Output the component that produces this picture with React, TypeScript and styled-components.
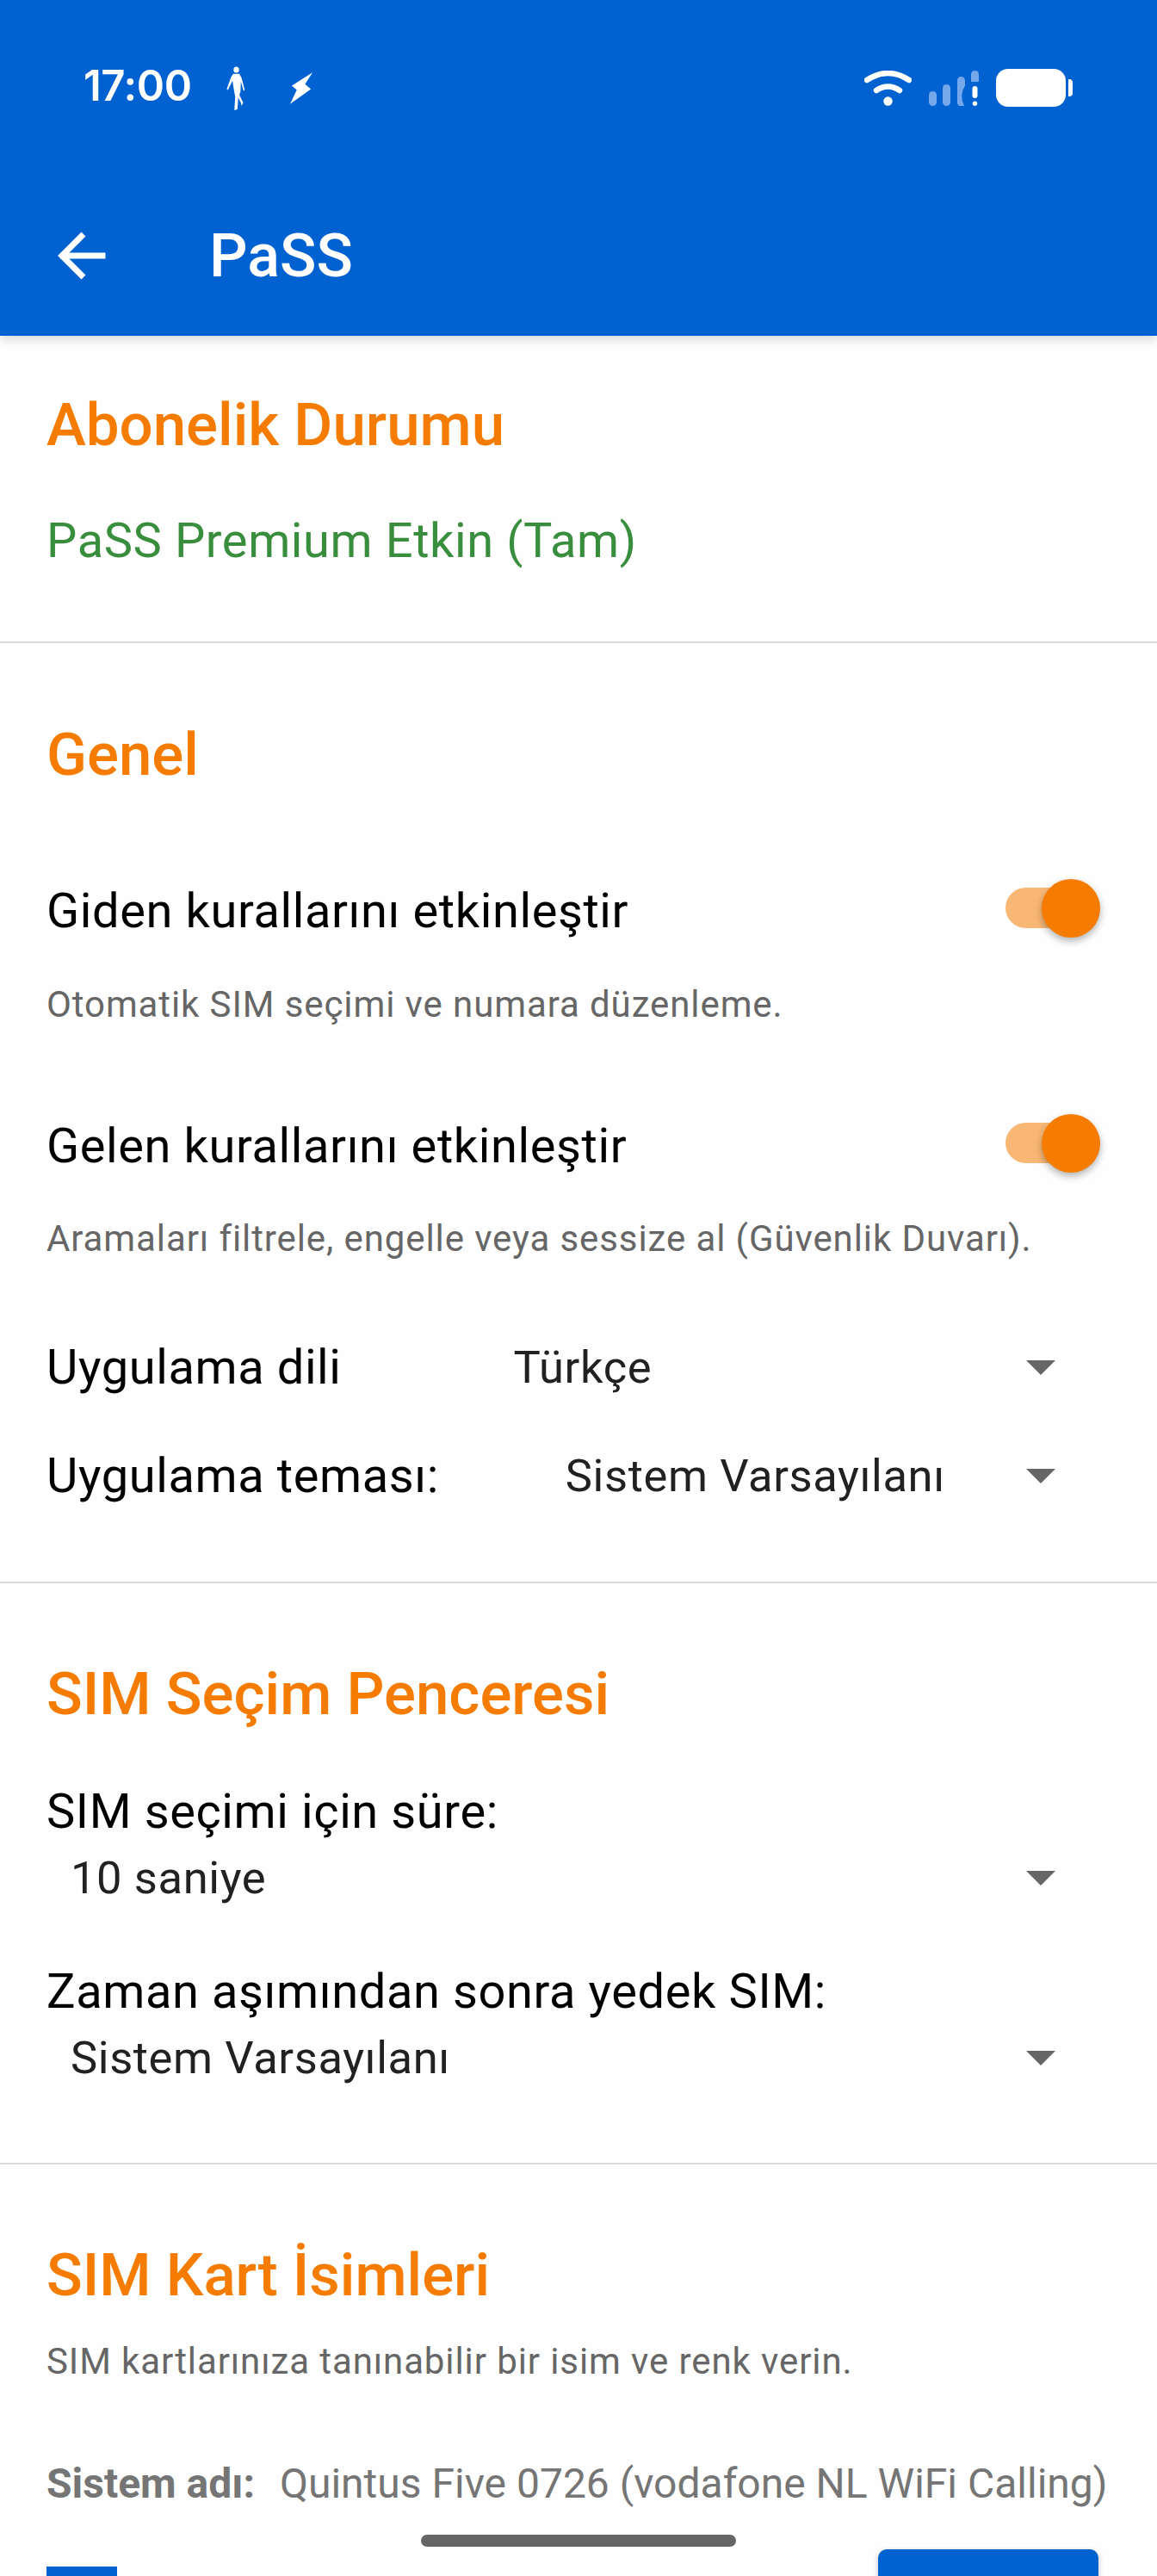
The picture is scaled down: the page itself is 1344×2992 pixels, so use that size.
import styled, { createGlobalStyle } from 'styled-components';

const GlobalStyle = createGlobalStyle`
    html, body {
        margin: 0;
        padding: 0;
        background: #fefefe;
    }
    body {
        font-family: Roboto, "Noto Sans", sans-serif;
    }
`;

const Screen = styled.div`
    position: relative;
    width: 1344px;
    height: 2992px;
    overflow: hidden;
    background: #fefefe;
`;

const AppBar = styled.header`
    height: 390px;
    background: #0062d1;
    box-shadow: 0 4px 12px rgba(0, 0, 0, 0.16);
    display: flex;
    flex-direction: column;
    position: relative;
`;

const StatusBar = styled.div`
    height: 204px;
    padding: 0 98px 0 97px;
    display: flex;
    align-items: center;
    justify-content: space-between;
    color: #fff;
`;

const StatusGroup = styled.div`
    display: flex;
    align-items: center;
`;

const Clock = styled.span`
    font-family: Inter, Roboto, sans-serif;
    font-size: 49px;
    font-weight: 600;
    letter-spacing: -0.4px;
    width: 166px;
    margin-bottom: 5px;
`;

const ToolBar = styled.div`
    height: 186px;
    display: flex;
    align-items: center;
    padding: 0 0 0 64px;
`;

const ToolTitle = styled.h1`
    margin: 0 0 0 119px;
    font-size: 70px;
    font-weight: 500;
    color: #fff;
`;

const Section = styled.section<{ $bottom?: number }>`
    padding: 0 54px ${({ $bottom }) => $bottom ?? 0}px;
    border-bottom: 2px solid #dcdcdc;

    &:last-of-type {
        border-bottom: none;
    }
`;

const SectionTitle = styled.h2<{ $top: number }>`
    margin: ${({ $top }) => $top}px 0 0;
    font-size: 69px;
    line-height: 74px;
    font-weight: 500;
    color: #f57c00;
`;

const StatusText = styled.div`
    margin: 65px 0 85px;
    font-size: 56px;
    line-height: 64px;
    color: #388e3c;
    letter-spacing: 0.6px;
`;

const ToggleRow = styled.div<{ $top: number }>`
    margin-top: ${({ $top }) => $top}px;
    display: flex;
    align-items: center;
    justify-content: space-between;
    height: 70px;
`;

const RowLabel = styled.span`
    font-size: 56px;
    line-height: 64px;
    color: #000;
    letter-spacing: 0.6px;
    white-space: nowrap;
`;

const PickerValue = styled.span`
    font-size: 52.5px;
    line-height: 64px;
    color: #212121;
    letter-spacing: 0.6px;
    white-space: nowrap;
`;

const HelpText = styled.p<{ $top: number }>`
    margin: ${({ $top }) => $top}px 0 0;
    font-size: 42px;
    line-height: 50px;
    color: #666;
    letter-spacing: 0.9px;
`;

const Track = styled.div`
    position: relative;
    width: 110px;
    height: 47px;
    margin: 0 12px 7px 0;
    border-radius: 24px;
    background: #f9b775;
`;

const Thumb = styled.div`
    position: absolute;
    right: 0;
    top: -10px;
    width: 68px;
    height: 68px;
    border-radius: 50%;
    background: #f57c00;
    box-shadow: 0 4px 8px rgba(0, 0, 0, 0.3);
`;

const Switch = () => (
    <Track>
        <Thumb />
    </Track>
);

const PickerRow = styled.div<{ $top: number }>`
    margin-top: ${({ $top }) => $top}px;
    display: flex;
    align-items: center;
    height: 64px;
`;

const PickerInline = styled.div<{ $start: number }>`
    flex: 1;
    display: flex;
    align-items: center;
    justify-content: space-between;
    padding-right: 64px;
    margin-left: ${({ $start }) => $start}px;
`;

const PickerBlock = styled.div`
    margin-left: 28px;
    height: 64px;
    display: flex;
    align-items: center;
    justify-content: space-between;
    padding-right: 64px;
`;

const Arrow = styled.span`
    width: 0;
    height: 0;
    border-left: 17px solid transparent;
    border-right: 17px solid transparent;
    border-top: 17px solid #666;
`;

const StackLabel = styled.div<{ $top: number }>`
    margin-top: ${({ $top }) => $top}px;
    height: 64px;
    display: flex;
    align-items: center;
    margin-bottom: 13px;
`;

const SystemLine = styled.div`
    margin-top: 87px;
    display: flex;
    align-items: baseline;
    font-size: 48px;
    line-height: 60px;
    color: #757575;
    white-space: nowrap;
`;

const SystemKey = styled.span`
    font-weight: 700;
    margin-right: 29px;
`;

const SimRow = styled.div`
    margin-top: 46px;
    display: flex;
    justify-content: space-between;
    align-items: flex-start;
    padding-right: 14px;
`;

const ColorSwatch = styled.div`
    margin-top: 20px;
    width: 82px;
    height: 82px;
    background: #0062d1;
`;

const SaveButton = styled.div`
    width: 256px;
    height: 120px;
    border-radius: 10px;
    background: #0062d1;
    box-shadow: 0 2px 6px rgba(0, 0, 0, 0.25);
`;

const HomePill = styled.div`
    position: absolute;
    left: 489px;
    top: 2944px;
    width: 366px;
    height: 14px;
    border-radius: 7px;
    background: #666;
`;

const WalkerIcon = () => (
    <svg width="23" height="51" viewBox="0 0 26 52" fill="#fff" preserveAspectRatio="none">
        <circle cx="13" cy="4" r="3.6" />
        <path d="M9 9 L17 9 L20 14 L24 28 L22.5 29 L19 18 L18.5 30 L17 34 L22 43 L20 47 L19 43 L15.5 37 L14.5 51 L10.5 52 L11.5 36 L9.5 26 L8 17 L2 28 L0.5 27 L6 13 Z" />
    </svg>
);

const BoltIcon = () => (
    <svg width="27" height="37" viewBox="0 0 28 38" fill="#fff" style={{ marginLeft: 51 }}>
        <path d="M27 0 L18 14 L25 20 L0 38 L8 21 L2 16 Z" />
    </svg>
);

const WifiIcon = () => (
    <svg width="55" height="41" viewBox="0 0 55 41" fill="none" stroke="#fff" strokeLinecap="round">
        <path d="M3 11 Q27.5 -5 52 11" strokeWidth="6.5" />
        <path d="M14 23 Q27.5 14 41 23" strokeWidth="6.5" />
        <circle cx="27.5" cy="35.5" r="5.2" fill="#fff" stroke="none" />
    </svg>
);

const SignalIcon = () => (
    <svg width="58" height="41" viewBox="0 0 58 41" style={{ marginLeft: 20 }}>
        <g fill="#74a8ea">
            <rect x="0" y="24" width="9" height="17" rx="4.5" />
            <rect x="16" y="16" width="9" height="25" rx="4.5" />
            <path d="M33 11.5 a4.5 4.5 0 0 1 9 0 v6 q-7 11 -1 23.5 h-4 q-4 0 -4 -4 Z" />
            <path d="M49 4.5 a4.5 4.5 0 0 1 9 0 v8.5 h-9 Z" />
        </g>
        <rect x="50.5" y="18" width="6" height="14" rx="3" fill="#fff" />
        <circle cx="53.5" cy="38.3" r="2.7" fill="#fff" />
    </svg>
);

const BatteryIcon = () => (
    <svg width="89" height="44" viewBox="0 0 89 44" style={{ marginLeft: 20 }}>
        <rect x="0" y="0" width="81" height="44" rx="14" fill="#fff" />
        <path d="M84 12 h1 a4 4 0 0 1 4 4 v12 a4 4 0 0 1 -4 4 h-1 Z" fill="#fff" />
    </svg>
);

const BackIcon = () => (
    <svg width="60" height="56" viewBox="0 0 60 56" fill="none" stroke="#fff" strokeWidth="7">
        <path d="M58.5 28 H6" />
        <path d="M33 3 L8 28 L33 53" />
    </svg>
);

export default function App() {
    return (
        <Screen>
            <GlobalStyle />
            <AppBar>
                <StatusBar>
                    <StatusGroup>
                        <Clock>17:00</Clock>
                        <WalkerIcon />
                        <BoltIcon />
                    </StatusGroup>
                    <StatusGroup>
                        <WifiIcon />
                        <SignalIcon />
                        <BatteryIcon />
                    </StatusGroup>
                </StatusBar>
                <ToolBar>
                    <BackIcon />
                    <ToolTitle>PaSS</ToolTitle>
                </ToolBar>
            </AppBar>

            <Section>
                <SectionTitle $top={67}>Abonelik Durumu</SectionTitle>
                <StatusText>PaSS Premium Etkin (Tam)</StatusText>
            </Section>

            <Section $bottom={91}>
                <SectionTitle $top={93}>Genel</SectionTitle>
                <ToggleRow $top={109}>
                    <RowLabel>Giden kurallarını etkinleştir</RowLabel>
                    <Switch />
                </ToggleRow>
                <HelpText $top={49}>Otomatik SIM seçimi ve numara düzenleme.</HelpText>
                <ToggleRow $top={104}>
                    <RowLabel>Gelen kurallarını etkinleştir</RowLabel>
                    <Switch />
                </ToggleRow>
                <HelpText $top={48}>Aramaları filtrele, engelle veya sessize al (Güvenlik Duvarı).</HelpText>
                <PickerRow $top={92}>
                    <RowLabel>Uygulama dili</RowLabel>
                    <PickerInline $start={200}>
                        <PickerValue>Türkçe</PickerValue>
                        <Arrow />
                    </PickerInline>
                </PickerRow>
                <PickerRow $top={62}>
                    <RowLabel>Uygulama teması:</RowLabel>
                    <PickerInline $start={147}>
                        <PickerValue>Sistem Varsayılanı</PickerValue>
                        <Arrow />
                    </PickerInline>
                </PickerRow>
            </Section>

            <Section $bottom={90}>
                <SectionTitle $top={92}>SIM Seçim Penceresi</SectionTitle>
                <StackLabel $top={67}>
                    <RowLabel>SIM seçimi için süre:</RowLabel>
                </StackLabel>
                <PickerBlock>
                    <PickerValue>10 saniye</PickerValue>
                    <Arrow />
                </PickerBlock>
                <StackLabel $top={68}>
                    <RowLabel>Zaman aşımından sonra yedek SIM:</RowLabel>
                </StackLabel>
                <PickerBlock>
                    <PickerValue>Sistem Varsayılanı</PickerValue>
                    <Arrow />
                </PickerBlock>
            </Section>

            <Section>
                <SectionTitle $top={92}>SIM Kart İsimleri</SectionTitle>
                <HelpText $top={38}>SIM kartlarınıza tanınabilir bir isim ve renk verin.</HelpText>
                <SystemLine>
                    <SystemKey>Sistem adı:</SystemKey>
                    Quintus Five 0726 (vodafone NL WiFi Calling)
                </SystemLine>
                <SimRow>
                    <ColorSwatch />
                    <SaveButton />
                </SimRow>
            </Section>

            <HomePill />
        </Screen>
    );
}
